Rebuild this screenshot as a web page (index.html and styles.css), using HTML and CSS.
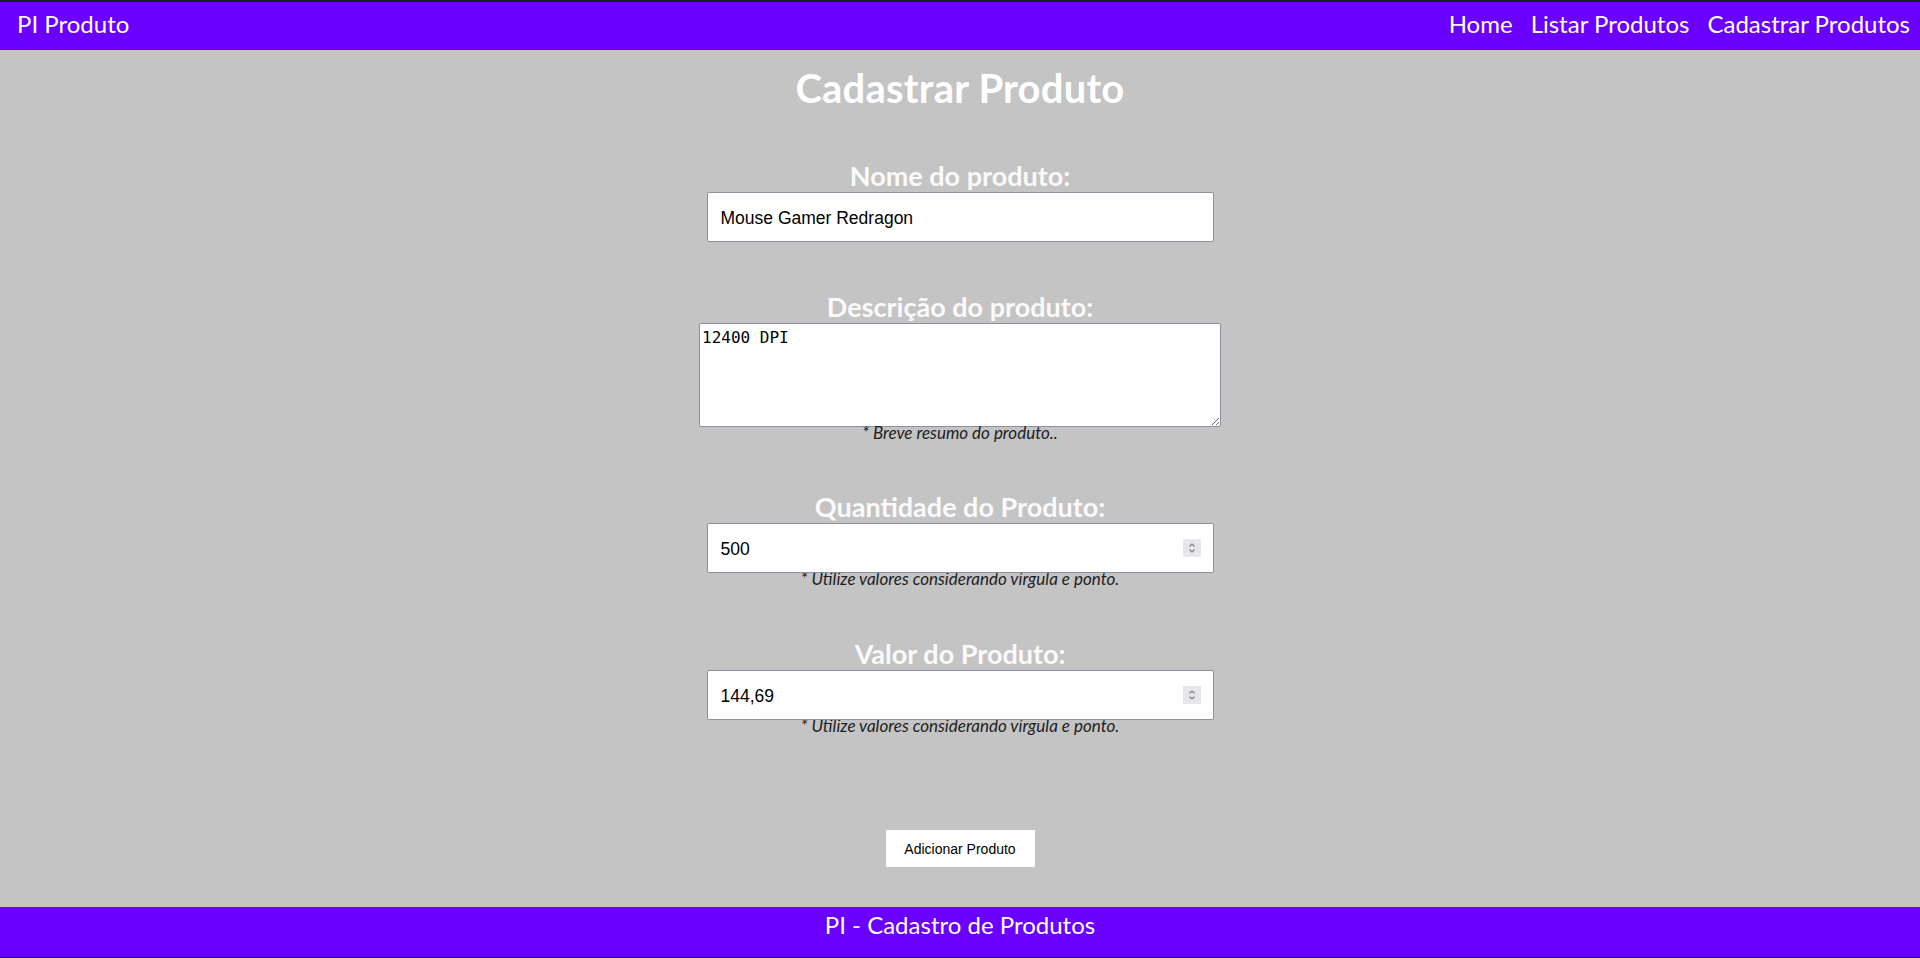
FILE: index.html
```html
<!DOCTYPE html>
<html lang="pt-BR">
<head>
<meta charset="utf-8">
<title>Cadastrar Produto</title>
<link rel="stylesheet" href="styles.css">
</head>
<body class="page">
  <header class="topbar">
    <a class="brand" href="#">PI Produto</a>
    <nav class="nav">
      <a class="nav-link" href="#">Home</a>
      <a class="nav-link" href="#">Listar Produtos</a>
      <a class="nav-link" href="#">Cadastrar Produtos</a>
    </nav>
  </header>

  <main class="content">
    <h1 class="title">Cadastrar Produto</h1>
    <form class="form">
      <div class="field">
        <label class="field-label" for="nome">Nome do produto:</label>
        <input class="text-input" id="nome" type="text" value="Mouse Gamer Redragon">
      </div>

      <div class="field">
        <label class="field-label" for="desc">Descrição do produto:</label>
        <textarea class="text-area" id="desc">12400 DPI</textarea>
        <small class="hint">* Breve resumo do produto..</small>
      </div>

      <div class="field">
        <label class="field-label" for="qtd">Quantidade do Produto:</label>
        <div class="number-wrap">
          <input class="text-input" id="qtd" type="text" value="500">
          <span class="spinner">
            <svg width="18" height="18" viewBox="0 0 18 18"><path d="M6.5 7.5 L9 5 L11.5 7.5" fill="none" stroke="#808089" stroke-width="1.2"/><path d="M6.5 10.5 L9 13 L11.5 10.5" fill="none" stroke="#808089" stroke-width="1.2"/></svg>
          </span>
        </div>
        <small class="hint">* Utilize valores considerando vírgula e ponto.</small>
      </div>

      <div class="field">
        <label class="field-label" for="valor">Valor do Produto:</label>
        <div class="number-wrap">
          <input class="text-input" id="valor" type="text" value="144,69">
          <span class="spinner">
            <svg width="18" height="18" viewBox="0 0 18 18"><path d="M6.5 7.5 L9 5 L11.5 7.5" fill="none" stroke="#808089" stroke-width="1.2"/><path d="M6.5 10.5 L9 13 L11.5 10.5" fill="none" stroke="#808089" stroke-width="1.2"/></svg>
          </span>
        </div>
        <small class="hint">* Utilize valores considerando vírgula e ponto.</small>
      </div>

      <div class="actions">
        <button class="submit" type="button">Adicionar Produto</button>
      </div>
    </form>
  </main>

  <footer class="bottombar">PI - Cadastro de Produtos</footer>
</body>
</html>
```
FILE: styles.css
```css
html, body {
  margin: 0;
  padding: 0;
}

.page {
  min-height: 100vh;
  display: flex;
  flex-direction: column;
  background: #c4c4c4;
  font-family: Lato, "Open Sans", sans-serif;
  color: #ffffff;
}

.topbar {
  box-sizing: border-box;
  height: 50px;
  border-top: 2px solid #1c1c1c;
  background: #6a00ff;
  display: flex;
  justify-content: space-between;
  align-items: flex-start;
  padding: 7px 10px 0 17px;
  font-size: 24px;
  line-height: normal;
}

.brand {
  color: #ffffff;
  text-decoration: none;
}

.nav {
  display: flex;
  gap: 18px;
}

.nav-link {
  color: #ffffff;
  text-decoration: none;
}

.content {
  flex: 1;
  display: flex;
  flex-direction: column;
  align-items: center;
  padding-top: 15px;
}

.title {
  margin: 0;
  font-size: 40px;
  font-weight: 700;
  letter-spacing: 0.2px;
  line-height: 46px;
  color: #ffffff;
}

.form {
  margin-top: 48px;
  display: flex;
  flex-direction: column;
  align-items: center;
  gap: 47.5px;
}

.field {
  display: flex;
  flex-direction: column;
  align-items: center;
}

.field-label {
  font-size: 27px;
  font-weight: 700;
  line-height: 33px;
  color: #fafafa;
}

.text-input {
  box-sizing: border-box;
  width: 507px;
  height: 50px;
  margin: 0;
  padding: 3px 13px 0;
  border: 1px solid #8f8f9d;
  border-radius: 2px;
  background: #ffffff;
  font-family: "Liberation Sans", Arial, sans-serif;
  font-size: 17.5px;
  color: #000000;
  outline: none;
}

.text-area {
  display: block;
  box-sizing: border-box;
  width: 522px;
  height: 104px;
  margin: 0;
  padding: 4px 2px 2px;
  border: 1px solid #8f8f9d;
  border-radius: 2px;
  background: #ffffff;
  font-family: "DejaVu Sans Mono", "Liberation Mono", monospace;
  font-size: 16px;
  color: #000000;
  outline: none;
}

.number-wrap {
  position: relative;
  width: 507px;
  height: 50px;
}

.spinner {
  position: absolute;
  right: 13px;
  top: 16px;
  width: 18px;
  height: 18px;
  background: #e6e6eb;
  display: flex;
}

.hint {
  display: block;
  padding-bottom: 4px;
  font-size: 17px;
  font-style: italic;
  line-height: 12px;
  color: #1e1e1e;
}

.actions {
  margin-top: 47px;
  display: flex;
  justify-content: center;
}

.submit {
  box-sizing: border-box;
  width: 149px;
  height: 37px;
  padding: 0;
  border: none;
  background: #ffffff;
  font-family: "Liberation Sans", Arial, sans-serif;
  font-size: 14px;
  color: #000000;
}

.bottombar {
  box-sizing: border-box;
  height: 51px;
  background: #6a00ff;
  border-bottom: 1px solid #1c1c1c;
  padding-top: 3px;
  text-align: center;
  font-size: 24px;
  line-height: normal;
  color: #ffffff;
}
```
